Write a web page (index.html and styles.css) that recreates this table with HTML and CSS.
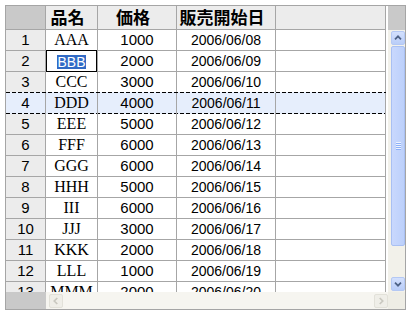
FILE: index.html
```html
<!DOCTYPE html>
<html lang="ja">
<head>
<meta charset="utf-8">
<title>DataGrid</title>
<link rel="stylesheet" href="styles.css">
</head>
<body>
<div class="grid">
  <div class="hrow">
    <div class="corner"></div>
    <div class="hcell">品名</div>
    <div class="hcell">価格</div>
    <div class="hcell">販売開始日</div>
    <div class="hcell"></div>
  </div>
  <div class="vcorner"></div>
  <div class="body">
    <div class="row"><div class="rh">1</div><div class="c name">AAA</div><div class="c num">1000</div><div class="c date">2006/06/08</div><div class="c"></div></div>
    <div class="row"><div class="rh">2</div><div class="c name sel"><span class="hl">BBB</span></div><div class="c num">2000</div><div class="c date">2006/06/09</div><div class="c"></div></div>
    <div class="row"><div class="rh">3</div><div class="c name">CCC</div><div class="c num">3000</div><div class="c date">2006/06/10</div><div class="c"></div></div>
    <div class="row focus"><div class="rh">4</div><div class="c name">DDD</div><div class="c num">4000</div><div class="c date">2006/06/11</div><div class="c"></div></div>
    <div class="row"><div class="rh">5</div><div class="c name">EEE</div><div class="c num">5000</div><div class="c date">2006/06/12</div><div class="c"></div></div>
    <div class="row"><div class="rh">6</div><div class="c name">FFF</div><div class="c num">6000</div><div class="c date">2006/06/13</div><div class="c"></div></div>
    <div class="row"><div class="rh">7</div><div class="c name">GGG</div><div class="c num">6000</div><div class="c date">2006/06/14</div><div class="c"></div></div>
    <div class="row"><div class="rh">8</div><div class="c name">HHH</div><div class="c num">5000</div><div class="c date">2006/06/15</div><div class="c"></div></div>
    <div class="row"><div class="rh">9</div><div class="c name">III</div><div class="c num">6000</div><div class="c date">2006/06/16</div><div class="c"></div></div>
    <div class="row"><div class="rh">10</div><div class="c name">JJJ</div><div class="c num">3000</div><div class="c date">2006/06/17</div><div class="c"></div></div>
    <div class="row"><div class="rh">11</div><div class="c name">KKK</div><div class="c num">2000</div><div class="c date">2006/06/18</div><div class="c"></div></div>
    <div class="row"><div class="rh">12</div><div class="c name">LLL</div><div class="c num">1000</div><div class="c date">2006/06/19</div><div class="c"></div></div>
    <div class="row"><div class="rh">13</div><div class="c name">MMM</div><div class="c num">2000</div><div class="c date">2006/06/20</div><div class="c"></div></div>
  </div>
  <div class="vscroll">
    <div class="vbtn"><svg width="14" height="14" viewBox="0 0 14 14"><polyline points="3.5,8.5 7,5 10.5,8.5" fill="none" stroke="#4d6185" stroke-width="2"/></svg></div>
    <div class="thumb"><svg width="7" height="8" viewBox="0 0 7 8"><path d="M1 0.5h5M1 2.5h5M1 4.5h5M1 6.5h5" stroke="#eef3fe" stroke-width="1"/><path d="M1 1.5h5M1 3.5h5M1 5.5h5M1 7.5h5" stroke="#8cb0f8" stroke-width="1"/></svg></div>
    <div class="vspace"></div>
    <div class="vbtn"><svg width="14" height="14" viewBox="0 0 14 14"><polyline points="3.5,5.5 7,9 10.5,5.5" fill="none" stroke="#4d6185" stroke-width="2"/></svg></div>
  </div>
  <div class="hside">
    <div class="hcorner"></div>
    <div class="hscroll">
      <div class="hbtn"><svg width="14" height="14" viewBox="0 0 14 14"><polyline points="8.5,3.5 5,7 8.5,10.5" fill="none" stroke="#c9c8c0" stroke-width="2"/></svg></div>
      <div class="hbtn"><svg width="14" height="14" viewBox="0 0 14 14"><polyline points="5.5,3.5 9,7 5.5,10.5" fill="none" stroke="#c9c8c0" stroke-width="2"/></svg></div>
    </div>
  </div>
  <div class="sizebox"></div>
</div>
</body>
</html>
```
FILE: styles.css
```css
body {
  margin: 0;
  background: #fff;
  font-family: "Liberation Sans", Arial, sans-serif;
  color: #000;
}
.grid {
  display: grid;
  grid-template-columns: 382px 17px;
  grid-template-rows: 24px 262px 17px;
  width: max-content;
  margin: 5px 0 0 5px;
  border: 1px solid #a5a5a5;
  background: #fff;
}
.body {
  overflow: hidden;
  background: #fff;
}
.hrow,
.row {
  display: grid;
  grid-template-columns: 40px 52px 79px 99px 110px;
  width: 380px;
  box-sizing: border-box;
  border-bottom: 1px solid #a6a6a6;
}
.corner {
  background: #c9c9c9;
  border-right: 1px solid #a6a6a6;
}
.hcell {
  background: #ececec;
  border-right: 1px solid #a6a6a6;
  padding-right: 8px;
  text-align: center;
  font-family: "Noto Sans CJK JP", sans-serif;
  font-weight: bold;
  font-size: 17px;
  line-height: 22px;
}
.row {
  height: 21px;
}
.rh,
.c {
  border-right: 1px solid #a6a6a6;
  text-align: center;
  line-height: 20px;
}
.rh {
  background: #ececec;
  font-size: 15px;
}
.c {
  background: #fff;
}
.name {
  font-family: "Liberation Serif", "Times New Roman", serif;
  font-size: 16px;
}
.num {
  font-size: 15px;
}
.date {
  font-size: 14px;
}
.focus {
  margin-top: -1px;
  height: 22px;
  padding-top: 1px;
  border-bottom: 0;
  background:
    repeating-linear-gradient(90deg, #000 0 4px, transparent 4px 6px) left top / 100% 1px no-repeat,
    repeating-linear-gradient(90deg, #000 0 4px, transparent 4px 6px) left bottom / 100% 1px no-repeat,
    #e6eefc;
}
.focus .rh,
.focus .c {
  background: transparent;
}
.sel {
  position: relative;
}
.sel::after {
  content: "";
  position: absolute;
  left: 0;
  right: 0;
  top: -1px;
  bottom: -1px;
  border: 1px solid #000;
}
.hl {
  background: #316ac5;
  color: #fff;
  font-family: "Liberation Sans", Arial, sans-serif;
  font-size: 14px;
  line-height: 14px;
  display: inline-block;
  vertical-align: middle;
}
.vcorner {
  background: #c9c9c9;
}
.vscroll {
  display: flex;
  flex-direction: column;
  padding: 1px 0 1px 3px;
  background: #f2f1ea;
}
.vbtn {
  height: 14px;
  box-sizing: border-box;
  border: 1px solid #b4c8f4;
  border-radius: 2px;
  background: linear-gradient(#d3e0fd, #b9cdf8);
  display: flex;
  align-items: center;
  justify-content: center;
}
.vbtn svg {
  display: block;
}
.thumb {
  height: 200px;
  margin-top: 1px;
  box-sizing: border-box;
  border: 1px solid #a9c0f3;
  border-radius: 2px;
  background: linear-gradient(90deg, #c9d8fd, #bcd0fb);
  display: flex;
  align-items: center;
  justify-content: center;
}
.vspace {
  flex: 1;
}
.hside {
  display: flex;
}
.hcorner {
  width: 40px;
  background: #c9c9c9;
}
.hscroll {
  flex: 1;
  display: flex;
  justify-content: space-between;
  padding: 2px 0 1px 3px;
  background: #f6f5f0;
}
.hbtn {
  width: 14px;
  height: 14px;
  box-sizing: border-box;
  border: 1px solid #e2e1d9;
  border-radius: 2px;
  background: #efeee8;
  display: flex;
  align-items: center;
  justify-content: center;
}
.hbtn svg {
  display: block;
}
.sizebox {
  background: #eeede5;
}
```
